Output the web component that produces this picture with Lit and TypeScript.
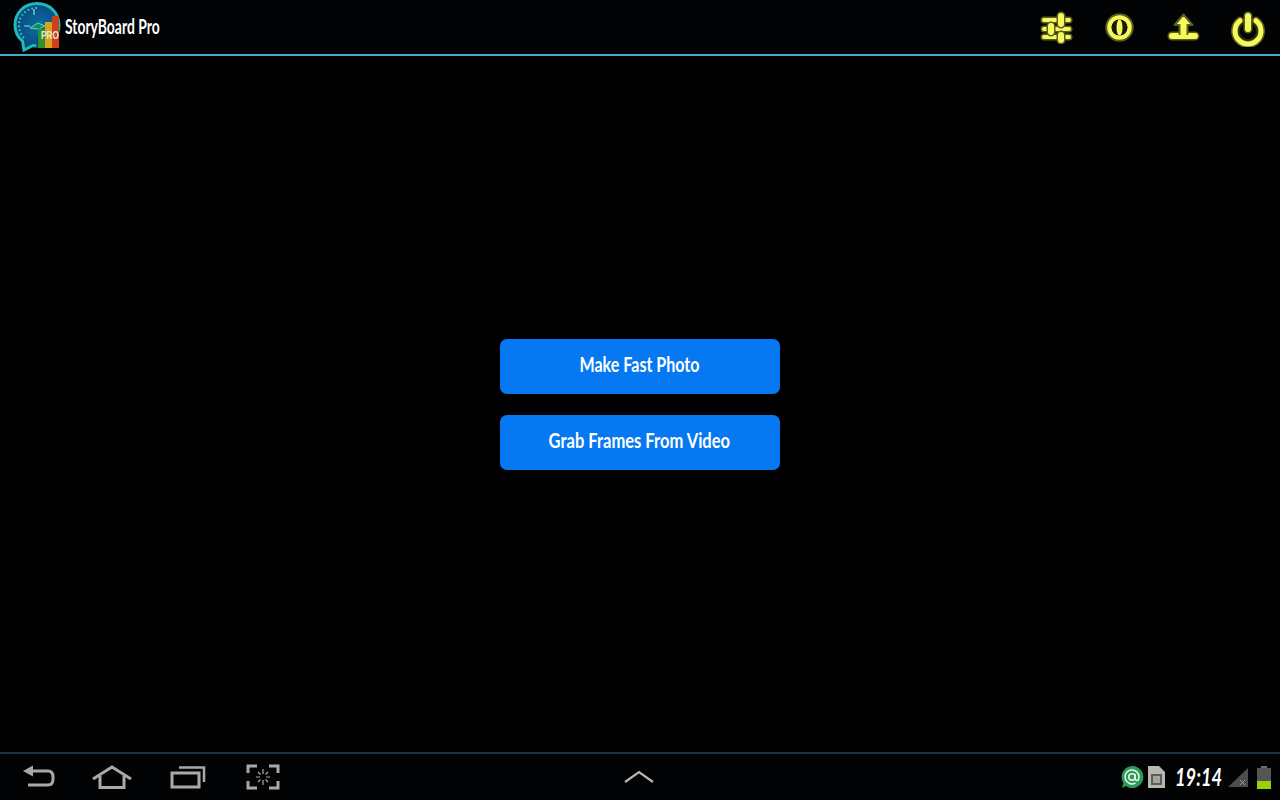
import { LitElement, html, css, svg } from "lit";
import { customElement } from "lit/decorators.js";

const Y = "#f5f95c";
const O = "#5a5d1e";

const double = (d: string, w: number) => svg`
  <path d=${d} fill="none" stroke=${O} stroke-width=${w + 3} stroke-linecap="round" stroke-linejoin="round"/>
  <path d=${d} fill="none" stroke=${Y} stroke-width=${w} stroke-linecap="round" stroke-linejoin="round"/>`;

@customElement("app-root")
export class AppRoot extends LitElement {
  static styles = css`
    :host {
      display: flex;
      flex-direction: column;
      width: 1280px;
      height: 800px;
      background: #000;
      overflow: hidden;
      font-family: "Lato", "Liberation Sans", sans-serif;
    }
    svg { display: block; flex: none; }
    .top {
      height: 54px;
      flex: none;
      display: flex;
      align-items: center;
      border-bottom: 2px solid #4aa6cf;
      background: #020304;
    }
    .logo { margin-left: 12px; }
    .title {
      margin-left: 3px;
      color: #fff;
      font-size: 20px;
      font-weight: 700;
      margin-top: -2px;
      width: 96px;
      white-space: nowrap;
    }
    .title span {
      display: inline-block;
      transform: scaleX(0.695);
      transform-origin: left center;
    }
    .actions {
      margin-left: auto;
      display: flex;
      align-items: center;
      gap: 30px;
      padding-right: 14px;
    }
    .main {
      flex: 1;
      display: flex;
      flex-direction: column;
      align-items: center;
      justify-content: center;
      gap: 21px;
      padding-top: 1px;
    }
    .btn {
      width: 280px;
      height: 55px;
      border: none;
      border-radius: 7px;
      background: #0578f2;
      color: #fff;
      font-family: inherit;
      font-size: 21px;
      font-weight: 700;
      padding: 0 2px 6px 0;
      margin: 0;
    }
    .btn span { display: inline-block; white-space: nowrap; }
    .btn .a { transform: scaleX(0.765); }
    .btn .b { transform: scaleX(0.787); }
    .bottom {
      height: 46px;
      flex: none;
      display: flex;
      align-items: center;
      border-top: 2px solid #1c3644;
      background: #020304;
    }
    .nav {
      display: flex;
      align-items: center;
      gap: 36px;
      padding-left: 21px;
      width: 600px;
    }
    .up { margin-left: 2px; }
    .status {
      margin-left: auto;
      display: flex;
      align-items: center;
      padding-right: 9px;
    }
    .sim { margin-left: 4px; }
    .time {
      margin-left: 10px;
      width: 49px;
      color: #fff;
      font-size: 24px;
      font-weight: 700;
      font-style: italic;
      white-space: nowrap;
      line-height: 26px;
    }
    .time span {
      display: inline-block;
      transform: scaleX(0.76);
      transform-origin: left center;
    }
    .signal { margin-left: 4px; }
    .batt { margin-left: 9px; }
  `;

  render() {
    return html`
      <div class="top">
        <svg class="logo" width="50" height="50" viewBox="0 0 50 50">
          <defs>
            <radialGradient id="bubble" cx="0.55" cy="0.5" r="0.6">
              <stop offset="0" stop-color="#0d6ea8"/>
              <stop offset="0.75" stop-color="#0a4f80"/>
              <stop offset="1" stop-color="#0a3f50"/>
            </radialGradient>
          </defs>
          <path d="M25 1.5C12 1.5 3 11 3 23c0 6.5 2.5 12 7.5 16L12 48l9-4.5c1.5.3 3 .5 4.5.5C38 44 47 35 47 23S38 1.5 25 1.5z" fill="url(#bubble)" stroke="#1fb8bc" stroke-width="3"/>
          <path d="M25 6C14 6 7 14 7 23c0 6 2.5 10.5 6 14" fill="none" stroke="#35d0e0" stroke-width="2" stroke-dasharray="1.5 2.5"/>
          <path d="M12 24H18M22 7V13" fill="none" stroke="#7fe4ea" stroke-width="1.2"/>
          <path d="M18 26L26 21L33 24L26 27Z" fill="#0c8a66" stroke="#5fdcb0" stroke-width="1"/>
          <path d="M27 24L30 46H24Z" fill="#0a4a5a"/>
          <rect x="26" y="27" width="7" height="19" fill="#2f8f30"/>
          <rect x="33" y="20" width="7" height="26" fill="#d9a21f"/>
          <rect x="40" y="14" width="7" height="32" fill="#cf3f1c"/>
          <text x="29" y="37" font-family="Liberation Sans" font-size="10" font-weight="700" fill="#e6ecd8" textLength="18" lengthAdjust="spacingAndGlyphs">PRO</text>
        </svg>
        <div class="title"><span>StoryBoard Pro</span></div>
        <div class="actions">
          <svg width="34" height="34" viewBox="0 0 34 34">
            ${double("M4 10H29M4 19H29M4 27H29", 4)}
            ${double("M21 6V14M11 16V22M21 25V30", 6)}
          </svg>
          <svg width="32" height="32" viewBox="0 0 32 32">
            <circle cx="15.5" cy="16.5" r="13" fill="none" stroke=${O} stroke-width="2.5"/>
            <circle cx="15.5" cy="16.5" r="10" fill="none" stroke=${Y} stroke-width="4.5"/>
            <circle cx="15.5" cy="16.5" r="8" fill="#1a1a06"/>
            <ellipse cx="15.5" cy="16.5" rx="3" ry="8" fill=${Y}/>
          </svg>
          <svg width="34" height="34" viewBox="0 0 34 34">
            ${double("M6 26H29", 6)}
            <path d="M17.5 4.5L26.5 15H21.5V24H13.5V15H8.5Z" fill=${Y} stroke=${O} stroke-width="2" stroke-linejoin="round"/>
            <path d="M14.5 23H20.5V26H14.5Z" fill=${Y}/>
          </svg>
          <svg width="36" height="40" viewBox="0 0 36 40">
            ${double("M10 13.75A13 13 0 1 0 26 13.75", 5)}
            <circle cx="18" cy="24" r="9" fill="none" stroke="#2a2b0a" stroke-width="2"/>
            ${double("M18 9V22", 6)}
          </svg>
        </div>
      </div>
      <div class="main">
        <button class="btn"><span class="a">Make Fast Photo</span></button>
        <button class="btn"><span class="b">Grab Frames From Video</span></button>
      </div>
      <div class="bottom">
        <div class="nav">
          <svg width="36" height="26" viewBox="0 0 36 26">
            <path d="M12 7H27Q32 7 32 13V15Q32 21 27 21H7" fill="none" stroke="#a9a9a9" stroke-width="3"/>
            <path d="M2 7L12 1.5V12.5Z" fill="#a9a9a9"/>
          </svg>
          <svg width="40" height="26" viewBox="0 0 40 26" style="margin-left:-1px">
            <path d="M1 15L20 3L39 15" fill="none" stroke="#a9a9a9" stroke-width="3"/>
            <path d="M8 12V23.5H32V12" fill="none" stroke="#a9a9a9" stroke-width="3"/>
          </svg>
          <svg width="36" height="26" viewBox="0 0 36 26" style="margin-left:2px">
            <rect x="2" y="9" width="27" height="14" fill="none" stroke="#a9a9a9" stroke-width="3"/>
            <path d="M9 3.5H34V18" fill="none" stroke="#a9a9a9" stroke-width="2.5"/>
          </svg>
          <svg width="34" height="26" viewBox="0 0 34 26" style="margin-left:4px">
            <path d="M2 9V2H11M23 2H32V9M32 17V24H23M11 24H2V17" fill="none" stroke="#a9a9a9" stroke-width="3"/>
            <path d="M17 5V10M17 16V21M10 13H14M20 13H24M12 8L14.5 10.5M22 8L19.5 10.5M12 18L14.5 15.5M22 18L19.5 15.5" fill="none" stroke="#a9a9a9" stroke-width="1.2"/>
          </svg>
        </div>
        <svg class="up" width="32" height="14" viewBox="0 0 32 14">
          <path d="M2 12L16 2L30 12" fill="none" stroke="#b5b5b5" stroke-width="2.2"/>
        </svg>
        <div class="status">
          <svg width="24" height="24" viewBox="0 0 24 24">
            <path d="M12.5 1A11 11 0 1 1 6 21L2 23L3.4 18A11 11 0 0 1 12.5 1Z" fill="#2e9a58"/>
            <circle cx="12" cy="12" r="3.2" fill="none" stroke="#e8f4ea" stroke-width="1.5"/>
            <path d="M15.2 9V13.5Q15.2 15.5 17 15.5T19 12A7 7 0 1 0 15.5 18" fill="none" stroke="#e8f4ea" stroke-width="1.5"/>
          </svg>
          <svg class="sim" width="17" height="22" viewBox="0 0 17 22">
            <path d="M0 0H11L17 6V22H0Z" fill="#b8b8b0"/>
            <rect x="3" y="8" width="11" height="11" fill="#5c5c56"/>
            <rect x="5" y="10" width="7" height="7" fill="#a4a49c"/>
          </svg>
          <div class="time"><span>19:14</span></div>
          <svg class="signal" width="20" height="19" viewBox="0 0 20 19">
            <path d="M20 0V19H0Z" fill="#4d4d4d"/>
            <path d="M12 12L17 17M17 12L12 17" stroke="#9a9a9a" stroke-width="1"/>
          </svg>
          <svg class="batt" width="14" height="23" viewBox="0 0 14 23">
            <rect x="4" y="0" width="6" height="3" fill="#6b6b6b"/>
            <rect x="0" y="2" width="14" height="13" fill="#555"/>
            <rect x="0" y="15" width="14" height="8" fill="#9ccf10"/>
          </svg>
        </div>
      </div>
    `;
  }
}
